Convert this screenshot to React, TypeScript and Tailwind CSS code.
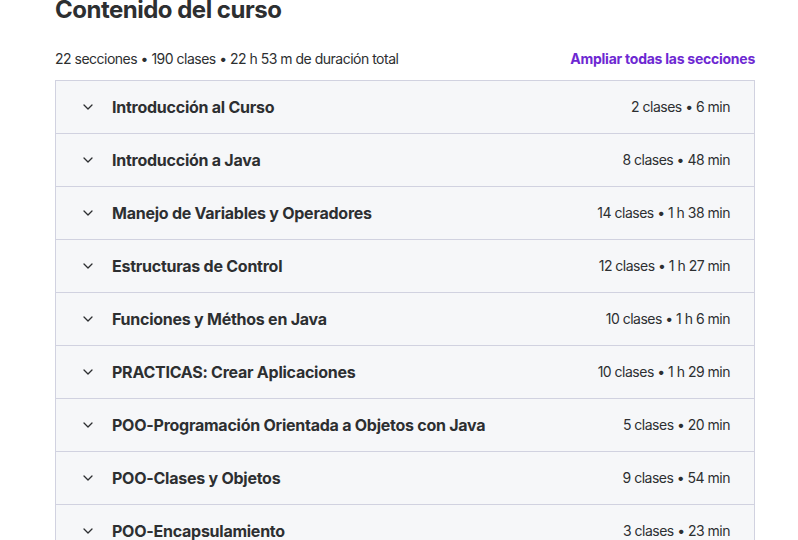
import React from 'react';

interface Section {
  title: string;
  meta: string;
}

const sections: Section[] = [
  { title: 'Introducción al Curso', meta: '2 clases • 6 min' },
  { title: 'Introducción a Java', meta: '8 clases • 48 min' },
  { title: 'Manejo de Variables y Operadores', meta: '14 clases • 1 h 38 min' },
  { title: 'Estructuras de Control', meta: '12 clases • 1 h 27 min' },
  { title: 'Funciones y Méthos en Java', meta: '10 clases • 1 h 6 min' },
  { title: 'PRACTICAS: Crear Aplicaciones', meta: '10 clases • 1 h 29 min' },
  { title: 'POO-Programación Orientada a Objetos con Java', meta: '5 clases • 20 min' },
  { title: 'POO-Clases y Objetos', meta: '9 clases • 54 min' },
  { title: 'POO-Encapsulamiento', meta: '3 clases • 23 min' },
];

const Chevron: React.FC = () => (
  <svg width="16" height="16" viewBox="0 0 16 16" fill="none" className="shrink-0">
    <path d="M4 6l4 4 4-4" stroke="#2d2f31" strokeWidth="1.3" strokeLinecap="round" strokeLinejoin="round" />
  </svg>
);

export default function App() {
  return (
    <div className="w-[798px] h-[540px] overflow-hidden bg-white text-[#2d2f31] font-['Inter',sans-serif]">
      <div className="pl-[55px] w-[755px]">
        {/* Heading */}
        <h2 className="-mt-[5px] text-[24px] leading-[29px] font-bold tracking-[-0.5px] text-[#2d2f31]">
          Contenido del curso
        </h2>

        {/* Summary line */}
        <div className="mt-[25px] mb-[11px] flex items-center justify-between text-[14px] leading-[20px]">
          <span className="tracking-[-0.5px]">22 secciones • 190 clases • 22 h 53 m de duración total</span>
          <button className="font-bold tracking-[-0.25px] text-[#6d28d2]">Ampliar todas las secciones</button>
        </div>

        {/* Sections list */}
        <div className="border border-[#d1d2e0] bg-[#f6f7f9]">
          {sections.map((s, i) => (
            <div
              key={i}
              className="h-[53px] px-[24px] pb-[1px] flex items-center border-b border-[#d1d2e0]"
            >
              <Chevron />
              <span className="ml-[16px] flex-1 text-[16px] leading-[20px] font-bold tracking-[-0.25px]">{s.title}</span>
              <span className="text-[14px] leading-[20px] tracking-[-0.5px]">{s.meta}</span>
            </div>
          ))}
        </div>
      </div>
    </div>
  );
}
